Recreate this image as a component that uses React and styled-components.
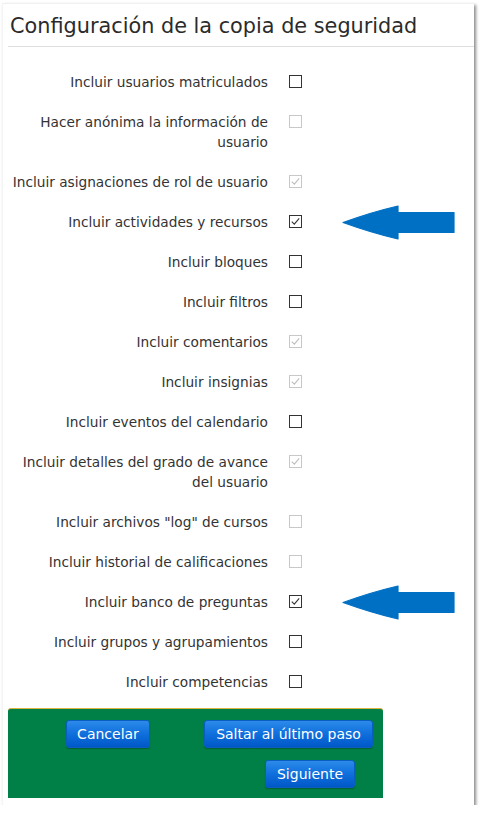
import React from "react";
import styled, { createGlobalStyle } from "styled-components";

const Global = createGlobalStyle`
  html, body { margin: 0; padding: 0; background: #ffffff; }
  body { font-family: "DejaVu Sans", Verdana, sans-serif; }
`;

const Card = styled.div`
  margin: 3px 0 0 2px;
  width: 472px;
  height: 802px;
  box-sizing: border-box;
  background: #fff;
  border-top: 1px solid #f0f0f0;
  border-left: 1px solid #f4f4f4;
  box-shadow: 2px 2px 3px rgba(0, 0, 0, 0.45);
  padding: 0 0 0 5px;
  display: flex;
  flex-direction: column;
`;

const Title = styled.h2`
  margin: 0;
  padding: 11px 0 9px 2px;
  font-family: "DejaVu Sans", Verdana, sans-serif;
  font-weight: normal;
  font-size: 20.8px;
  line-height: 22px;
  color: #2b2b2b;
  border-bottom: 1px solid #dedede;
`;

const Form = styled.div`
  padding-top: 15px;
  display: flex;
  flex-direction: column;
`;

const Row = styled.div`
  display: grid;
  grid-template-columns: 264px 13px 1fr;
  column-gap: 21px;
  margin-left: -4px;
  padding: 10px 0;
  align-items: start;
`;

const Label = styled.div`
  text-align: right;
  font-size: 13.7px;
  line-height: 20px;
  color: #333;
`;

const Box = styled.span`
  width: 13px;
  height: 13px;
  box-sizing: border-box;
  margin-top: 3px;
  border: 1px solid ${(p) => (p.$disabled ? "#c8c8c8" : "#333")};
  background: #fff;
  display: flex;
  align-items: center;
  justify-content: center;
`;

const ArrowWrap = styled.div`
  position: relative;
  height: 20px;
`;

const ArrowSvg = styled.svg`
  position: absolute;
  left: 19px;
  top: -7px;
`;

const Footer = styled.div`
  margin-top: 6px;
  width: 375px;
  box-sizing: border-box;
  background: #007f46;
  border-top: 1px solid #d9b440;
  border-radius: 3px 3px 0 0;
  padding: 11px 0 10px 0;
  display: flex;
  flex-direction: column;
  gap: 12px;
`;

const BtnRow = styled.div`
  display: flex;
  justify-content: ${(p) => (p.$end ? "flex-end" : "flex-start")};
  padding: ${(p) => (p.$end ? "0 28px 0 0" : "0 0 0 58px")};
  gap: 54px;
`;

const Button = styled.button`
  height: 28px;
  padding: 0;
  font-family: "DejaVu Sans", Verdana, sans-serif;
  font-size: 14px;
  color: #fff;
  border: 1px solid #0a5ec0;
  border-radius: 3px;
  background: linear-gradient(to bottom, #2c8aea 0%, #0f6fdc 50%, #0058c8 100%);
  box-shadow: 0 1px 1px rgba(0, 0, 0, 0.25);
  width: ${(p) => p.$w}px;
  cursor: pointer;
`;

function Check({ checked, disabled }) {
  return (
    <Box $disabled={disabled}>
      {checked && (
        <svg width="11" height="11" viewBox="0 0 11 11">
          <path
            d="M1.8 5.6 L4.3 8.1 L9.2 2.4"
            fill="none"
            stroke={disabled ? "#bdbdbd" : "#333"}
            strokeWidth="1.1"
          />
        </svg>
      )}
    </Box>
  );
}

function Arrow() {
  return (
    <ArrowSvg width="114" height="36" viewBox="0 0 114 36">
      <path
        d="M1 17.5 Q30 7 56 1 L56 7.5 L112 7.5 L112 27.5 L56 27.5 L56 34 Q30 28 1 17.5 Z"
        fill="#0070c4"
        stroke="#0070c4"
        strokeWidth="1.2"
        strokeLinejoin="round"
      />
    </ArrowSvg>
  );
}

const items = [
  { label: "Incluir usuarios matriculados" },
  { label: "Hacer anónima la información de usuario", disabled: true },
  { label: "Incluir asignaciones de rol de usuario", checked: true, disabled: true },
  { label: "Incluir actividades y recursos", checked: true, arrow: true },
  { label: "Incluir bloques" },
  { label: "Incluir filtros" },
  { label: "Incluir comentarios", checked: true, disabled: true },
  { label: "Incluir insignias", checked: true, disabled: true },
  { label: "Incluir eventos del calendario" },
  { label: "Incluir detalles del grado de avance del usuario", checked: true, disabled: true },
  { label: 'Incluir archivos "log" de cursos', disabled: true },
  { label: "Incluir historial de calificaciones", disabled: true },
  { label: "Incluir banco de preguntas", checked: true, arrow: true },
  { label: "Incluir grupos y agrupamientos" },
  { label: "Incluir competencias" },
];

export default function App() {
  return (
    <>
      <Global />
      <Card>
        <Title>Configuración de la copia de seguridad</Title>
        <Form>
          {items.map((it) => (
            <Row key={it.label}>
              <Label>{it.label}</Label>
              <Check checked={it.checked} disabled={it.disabled} />
              <ArrowWrap>{it.arrow && <Arrow />}</ArrowWrap>
            </Row>
          ))}
        </Form>
        <Footer>
          <BtnRow>
            <Button $w={84}>Cancelar</Button>
            <Button $w={169}>Saltar al último paso</Button>
          </BtnRow>
          <BtnRow $end>
            <Button $w={90}>Siguiente</Button>
          </BtnRow>
        </Footer>
      </Card>
    </>
  );
}
